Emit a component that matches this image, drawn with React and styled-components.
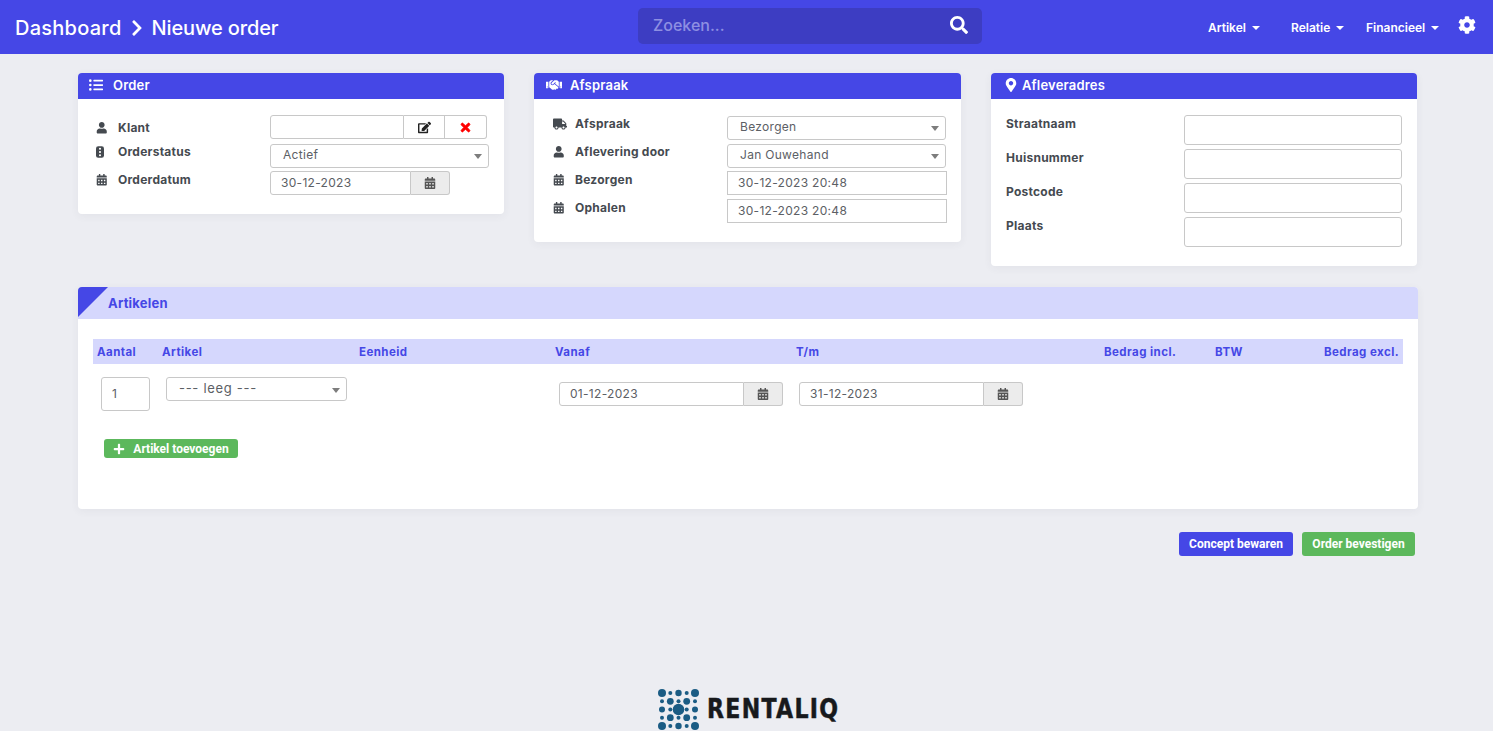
import React from 'react'
import styled, { createGlobalStyle } from 'styled-components'
import {
    FaListUl, FaHandshake, FaMapMarkerAlt, FaUser, FaCalendarAlt, FaTruck,
    FaEdit, FaTimes, FaPlus, FaSearch, FaCog, FaChevronRight
} from 'react-icons/fa'

const GlobalStyle = createGlobalStyle`
    * { box-sizing: border-box; }
    html, body { margin: 0; padding: 0; height: 731px; overflow: hidden; }
    body {
        background: #ecedf2;
        font-family: Inter, "Noto Sans", sans-serif;
        color: #454a50;
    }
`

const Navbar = styled.header`
    height: 54px;
    background: #4547e6;
    display: flex;
    align-items: center;
    color: #fff;
    position: relative;
`

const Breadcrumb = styled.div`
    width: 638px;
    padding: 2px 0 0 15px;
    display: flex;
    align-items: center;
    gap: 6px;
    font-size: 20px;
    font-weight: 500;
    letter-spacing: 0.25px;
`

const CurrentCrumb = styled.span`
    letter-spacing: -0.15px;
`

const SearchBar = styled.div`
    width: 344px;
    height: 36px;
    margin-top: -2px;
    background: #3d3dc2;
    border-radius: 5px;
    display: flex;
    align-items: center;
    justify-content: space-between;
    padding: 0 14px 2px 15px;
    font-size: 18px;
`

const SearchInput = styled.input`
    background: none;
    border: 0;
    outline: 0;
    flex: 1;
    padding: 0;
    font-family: Inter, sans-serif;
    font-size: 16px;
    font-weight: 500;
    color: #fff;
    &::placeholder { color: #8e8fe2; opacity: 1; }
`

const NavMenu = styled.nav`
    flex: 1;
    display: flex;
    align-items: center;
    justify-content: flex-end;
    padding: 0 17px 0 0;
    svg { margin-top: -5px; }
`

const NavItem = styled.a`
    font-size: 12px;
    font-weight: 600;
    width: ${p => p.$width}px;
    display: flex;
    align-items: center;
    gap: 6px;
    white-space: nowrap;
`

const NavCaret = styled.span`
    border-top: 4px solid #fff;
    border-left: 4px solid transparent;
    border-right: 4px solid transparent;
    margin-top: 2px;
`

const Page = styled.main`
    width: 1340px;
    margin: 19px 0 0 78px;
`

const TopRow = styled.div`
    display: grid;
    grid-template-columns: 426px 427px 426px;
    column-gap: 30px;
    align-items: start;
`

const Card = styled.section`
    background: #fff;
    border-radius: 4px;
    box-shadow: 0 2px 8px rgba(60, 60, 90, 0.06);
    overflow: hidden;
    padding-bottom: ${p => p.$bottom}px;
`

const CardHeader = styled.h3`
    margin: 0;
    height: 26px;
    padding-bottom: 2px;
    background: #4547e6;
    color: #fff;
    font-size: 13px;
    font-weight: 600;
    letter-spacing: 0.2px;
    display: flex;
    align-items: center;
    gap: ${p => p.$gap}px;
    padding-left: ${p => p.$left}px;
    svg { font-size: ${p => p.$icon || 14}px; }
`

const FormRows = styled.div`
    padding-top: 16px;
    display: flex;
    flex-direction: column;
    gap: 4px;
`

const FormRow = styled.div`
    display: flex;
    height: ${p => p.$height || 24}px;
    padding-left: ${p => p.$left}px;
`

const Label = styled.label`
    width: ${p => p.$width}px;
    display: flex;
    align-items: flex-start;
    font-size: 12px;
    font-weight: 700;
    letter-spacing: 0.25px;
    line-height: 18px;
    padding-top: ${p => p.$top || 0}px;
    white-space: nowrap;
`

const LabelIcon = styled.span`
    width: 22px;
    display: flex;
    align-items: center;
    height: 18px;
    font-size: 11.5px;
    color: #454a50;
`

const Field = styled.input`
    width: ${p => p.$width}px;
    height: ${p => p.$height || 24}px;
    border: 1px solid #c8c8c8;
    border-radius: ${p => p.$radius || '3px'};
    padding: 0 10px 2px;
    font-family: Inter, sans-serif;
    font-size: 12px;
    letter-spacing: 0.3px;
    color: #5c6065;
    background: #fff;
    outline: 0;
`

const Group = styled.div`
    display: flex;
`

const AddonButton = styled.button`
    width: ${p => p.$width}px;
    height: 24px;
    border: 1px solid #c8c8c8;
    border-left: 0;
    border-radius: ${p => p.$radius || '0 3px 3px 0'};
    background: ${p => p.$plain ? '#fff' : '#ececec'};
    color: ${p => p.$color || '#555'};
    display: flex;
    align-items: center;
    justify-content: center;
    font-size: 12px;
    padding: 0;
`

const SelectWrap = styled.div`
    position: relative;
    width: ${p => p.$width}px;
    height: 24px;
    &::after {
        content: '';
        position: absolute;
        right: 7px;
        top: 11px;
        border-top: 5px solid #7d7d7d;
        border-left: 4px solid transparent;
        border-right: 4px solid transparent;
    }
`

const Select = styled.select`
    width: 100%;
    height: 24px;
    appearance: none;
    border: 1px solid #c8c8c8;
    border-radius: 3px;
    padding: 0 0 2px 12px;
    font-family: Inter, sans-serif;
    font-size: ${p => p.$size || 12}px;
    letter-spacing: ${p => p.$spacing || 0.3}px;
    color: #5c6065;
    background: #fff;
    outline: 0;
`

const ArticlesCard = styled(Card)`
    margin-top: ${p => p.$top}px;
    height: 222px;
`

const ArticlesHeader = styled.h3`
    margin: 0;
    height: 32px;
    padding: 0 0 1px 30px;
    background: #d5d7fd;
    color: #4547e6;
    font-size: 13px;
    font-weight: 700;
    letter-spacing: 0.2px;
    display: flex;
    align-items: center;
    position: relative;
    &::before {
        content: '';
        position: absolute;
        left: 0;
        top: 0;
        border-top: 30px solid #4547e6;
        border-right: 30px solid transparent;
    }
`

const COLUMNS = '65px 197px 196px 241px 308px 111px 79px 113px'

const TableHead = styled.div`
    margin: 20px 15px 0;
    height: 25px;
    background: #d5d7fd;
    color: #4547e6;
    display: grid;
    grid-template-columns: ${COLUMNS};
    align-items: center;
    font-size: 11.5px;
    font-weight: 700;
    letter-spacing: 0.45px;
`

const Th = styled.div`
    padding: 0 4px;
    text-align: ${p => p.$right ? 'right' : 'left'};
    white-space: nowrap;
`

const TableRow = styled.div`
    margin: 13px 15px 0;
    height: 34px;
    display: grid;
    grid-template-columns: ${COLUMNS};
`

const Cell = styled.div`
    padding-left: ${p => p.$pad}px;
    padding-top: ${p => p.$top || 0}px;
`

const AppButton = styled.button`
    height: ${p => p.$height}px;
    width: ${p => p.$width}px;
    border: 0;
    border-radius: 3px;
    background: ${p => p.$green ? '#5cb85c' : '#4547e6'};
    color: #fff;
    font-family: Roboto, sans-serif;
    font-size: 12px;
    font-weight: 700;
    display: flex;
    align-items: center;
    justify-content: center;
    gap: 8px;
    padding: 0;
    white-space: nowrap;
    svg { font-size: 12px; }
`

const AddRow = styled.div`
    margin: 28px 0 0 26px;
`

const Actions = styled.div`
    margin-top: 23px;
    padding-right: 3px;
    display: flex;
    justify-content: flex-end;
    gap: 9px;
`

const Footer = styled.footer`
    margin-top: 133px;
    display: flex;
    justify-content: center;
    align-items: center;
    gap: 8px;
    padding-left: 3px;
`

const LogoText = styled.span`
    font-family: "DejaVu Sans", sans-serif;
    font-size: 26px;
    line-height: 41px;
    font-weight: 700;
    letter-spacing: 1.5px;
    color: #17191c;
    transform: scaleX(0.85);
    transform-origin: left center;
    width: 131px;
    white-space: nowrap;
    -webkit-text-stroke: 0.5px #17191c;
`

const DOTS = [
    [4, 4, 4], [12.3, 4, 2], [20.5, 4, 3.2], [28.7, 4, 2], [37, 4, 4],
    [4, 12.3, 2], [12.3, 12.3, 3.4], [20.5, 12.3, 2], [28.7, 12.3, 3.4], [37, 12.3, 2],
    [4, 20.5, 3], [12.3, 20.5, 2], [20.5, 20.5, 5.8], [28.7, 20.5, 2], [37, 20.5, 3],
    [4, 28.7, 2], [12.3, 28.7, 3.4], [20.5, 28.7, 2], [28.7, 28.7, 3.4], [37, 28.7, 2],
    [4, 37, 4], [12.3, 37, 2], [20.5, 37, 3.2], [28.7, 37, 2], [37, 37, 4]
]

const LogoMark = () => (
    <svg width="41" height="41" viewBox="0 0 41 41">
        {DOTS.map(([cx, cy, r], i) => <circle key={i} cx={cx} cy={cy} r={r} fill="#1b5c84" />)}
    </svg>
)

const StatusIcon = () => (
    <svg width="8" height="12" viewBox="0 0 9 13">
        <rect width="9" height="13" rx="2.5" fill="#454a50" />
        <circle cx="4.5" cy="2.8" r="1.2" fill="#fff" />
        <circle cx="4.5" cy="6.5" r="1.2" fill="#fff" />
        <circle cx="4.5" cy="10.2" r="1.2" fill="#fff" />
    </svg>
)

const DateGroup = ({ value, width = 185, addon = 39 }) => (
    <Group>
        <Field defaultValue={value} $width={width} $radius="3px 0 0 3px" />
        <AddonButton $width={addon}><FaCalendarAlt /></AddonButton>
    </Group>
)

const Dropdown = ({ value, width, size, spacing }) => (
    <SelectWrap $width={width}>
        <Select defaultValue={value} $size={size} $spacing={spacing}><option>{value}</option></Select>
    </SelectWrap>
)

const App = () => {
    return (
        <>
            <GlobalStyle />
            <Navbar>
                <Breadcrumb>
                    Dashboard <FaChevronRight size={18} /> <CurrentCrumb>Nieuwe order</CurrentCrumb>
                </Breadcrumb>
                <SearchBar>
                    <SearchInput placeholder="Zoeken..." />
                    <FaSearch />
                </SearchBar>
                <NavMenu>
                    <NavItem $width={83}>Artikel <NavCaret /></NavItem>
                    <NavItem $width={75}>Relatie <NavCaret /></NavItem>
                    <NavItem $width={92}>Financieel <NavCaret /></NavItem>
                    <FaCog size={18} />
                </NavMenu>
            </Navbar>

            <Page>
                <TopRow>
                    <Card $bottom={19}>
                        <CardHeader $left={11} $gap={10}><FaListUl />Order</CardHeader>
                        <FormRows>
                            <FormRow $left={18}>
                                <Label $width={174} $top={4}>
                                    <LabelIcon><FaUser /></LabelIcon>Klant
                                </Label>
                                <Group>
                                    <Field $width={134} $radius="3px 0 0 3px" />
                                    <AddonButton $width={41} $plain $radius="0" $color="#222"><FaEdit size={13} /></AddonButton>
                                    <AddonButton $width={42} $plain $color="#f00"><FaTimes size={13} stroke="#f00" strokeWidth={30} /></AddonButton>
                                </Group>
                            </FormRow>
                            <FormRow $left={18}>
                                <Label $width={174}>
                                    <LabelIcon><StatusIcon /></LabelIcon>Orderstatus
                                </Label>
                                <Dropdown value="Actief" width={219} />
                            </FormRow>
                            <FormRow $left={18}>
                                <Label $width={174}>
                                    <LabelIcon><FaCalendarAlt /></LabelIcon>Orderdatum
                                </Label>
                                <DateGroup value="30-12-2023" width={141} />
                            </FormRow>
                        </FormRows>
                    </Card>

                    <Card $bottom={19}>
                        <CardHeader $left={12} $gap={8} $icon={16}><FaHandshake />Afspraak</CardHeader>
                        <FormRows>
                            <FormRow $left={19}>
                                <Label $width={174}>
                                    <LabelIcon><FaTruck size={14} /></LabelIcon>Afspraak
                                </Label>
                                <Dropdown value="Bezorgen" width={219} />
                            </FormRow>
                            <FormRow $left={19}>
                                <Label $width={174}>
                                    <LabelIcon><FaUser /></LabelIcon>Aflevering door
                                </Label>
                                <Dropdown value="Jan Ouwehand" width={219} />
                            </FormRow>
                            <FormRow $left={19}>
                                <Label $width={174}>
                                    <LabelIcon><FaCalendarAlt /></LabelIcon>Bezorgen
                                </Label>
                                <Field defaultValue="30-12-2023 20:48" $width={220} $radius="0" />
                            </FormRow>
                            <FormRow $left={19}>
                                <Label $width={174}>
                                    <LabelIcon><FaCalendarAlt /></LabelIcon>Ophalen
                                </Label>
                                <Field defaultValue="30-12-2023 20:48" $width={220} $radius="0" />
                            </FormRow>
                        </FormRows>
                    </Card>

                    <Card $bottom={19}>
                        <CardHeader $left={13} $gap={4} $icon={14}><FaMapMarkerAlt />Afleveradres</CardHeader>
                        <FormRows>
                            {['Straatnaam', 'Huisnummer', 'Postcode', 'Plaats'].map(name => (
                                <FormRow key={name} $left={15} $height={30}>
                                    <Label $width={178}>{name}</Label>
                                    <Field $width={218} $height={30} />
                                </FormRow>
                            ))}
                        </FormRows>
                    </Card>
                </TopRow>

                <ArticlesCard $top={21}>
                    <ArticlesHeader>Artikelen</ArticlesHeader>
                    <TableHead>
                        <Th>Aantal</Th>
                        <Th>Artikel</Th>
                        <Th>Eenheid</Th>
                        <Th>Vanaf</Th>
                        <Th>T/m</Th>
                        <Th>Bedrag incl.</Th>
                        <Th>BTW</Th>
                        <Th $right>Bedrag excl.</Th>
                    </TableHead>
                    <TableRow>
                        <Cell $pad={8}><Field defaultValue="1" $width={49} $height={34} /></Cell>
                        <Cell $pad={8}><Dropdown value="--- leeg ---" width={181} size={13} spacing={0.7} /></Cell>
                        <Cell />
                        <Cell $pad={8} $top={5}><DateGroup value="01-12-2023" /></Cell>
                        <Cell $pad={7} $top={5}><DateGroup value="31-12-2023" /></Cell>
                    </TableRow>
                    <AddRow>
                        <AppButton $green $width={134} $height={19}><FaPlus />Artikel toevoegen</AppButton>
                    </AddRow>
                </ArticlesCard>

                <Actions>
                    <AppButton $width={114} $height={24}>Concept bewaren</AppButton>
                    <AppButton $green $width={113} $height={24}>Order bevestigen</AppButton>
                </Actions>
            </Page>

            <Footer>
                <LogoMark />
                <LogoText>RENTALIQ</LogoText>
            </Footer>
        </>
    )
}

export default App
